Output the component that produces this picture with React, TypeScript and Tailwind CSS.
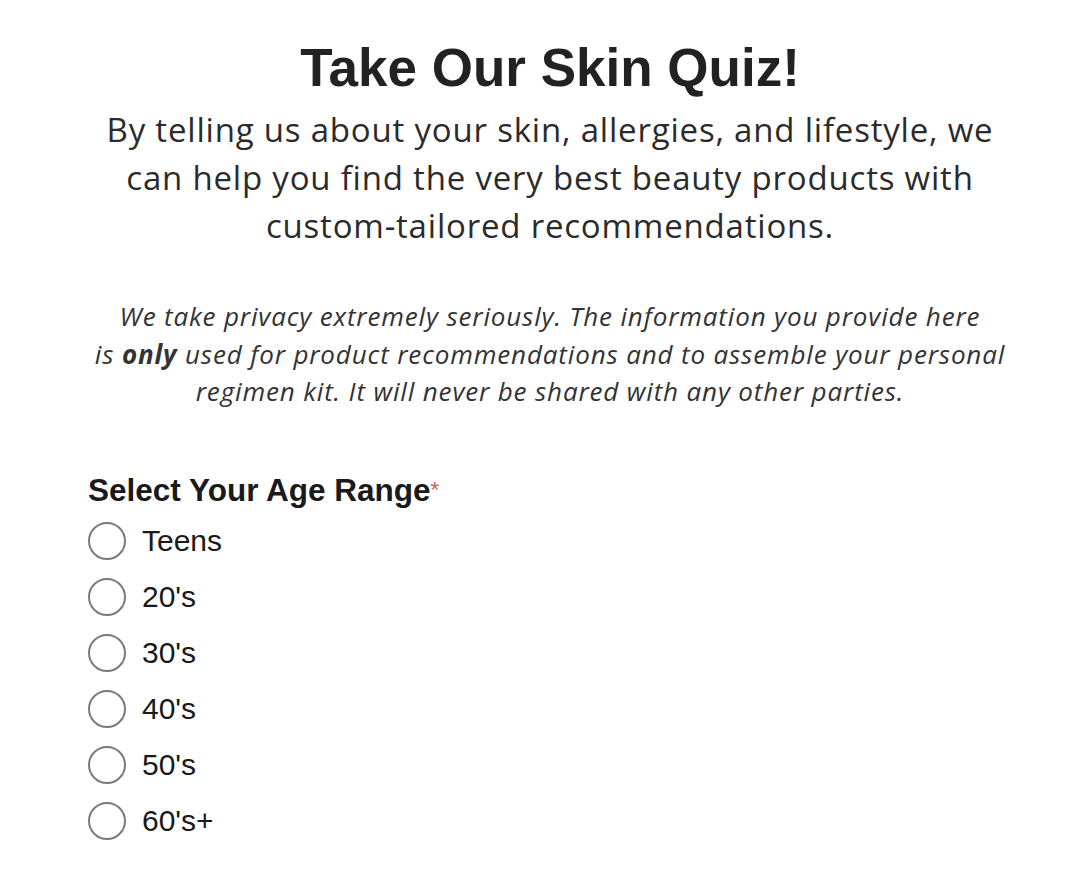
const ages = ["Teens", "20's", "30's", "40's", "50's", "60's+"];

const App = () => {
  return (
    <div className="min-h-[875px] w-full bg-white text-[#222]">
      <div className="ml-[88px] w-[924px] pt-[36px]">
        <h1 className="text-center font-['Liberation_Sans',Arial,sans-serif] text-[53px] font-bold leading-[64px]">
          Take Our Skin Quiz!
        </h1>
        <p className="mt-[6px] text-center font-['Open_Sans',sans-serif] text-[33px] leading-[48px] tracking-[0.8px] text-[#2b2b2b]">
          By telling us about your skin, allergies, and lifestyle, we
          <br />
          can help you find the very best beauty products with
          <br />
          custom-tailored recommendations.
        </p>
        <p className="mt-[48px] text-center font-['Open_Sans',sans-serif] text-[26px] italic leading-[37.5px] tracking-[0.85px] text-[#333]">
          We take privacy extremely seriously. The information you provide here
          <br />
          is <b className="font-bold">only</b> used for product recommendations and to assemble your personal
          <br />
          regimen kit. It will never be shared with any other parties.
        </p>

        <fieldset className="mt-[59px] font-['Liberation_Sans',Arial,sans-serif]">
          <legend className="text-[31.5px] font-bold leading-[40px] text-[#1a1a1a]">
            Select Your Age Range<span className="align-top text-[22px] font-normal text-[#d9534f]">*</span>
          </legend>
          <div className="mt-[3px] flex flex-col">
            {ages.map((age) => (
              <label key={age} className="flex h-[56px] items-center gap-[16px]">
                <span className="h-[38px] w-[38px] shrink-0 rounded-full border-2 border-[#7a7a7a] bg-white" />
                <span className="text-[30px] leading-none text-[#1a1a1a]">{age}</span>
              </label>
            ))}
          </div>
        </fieldset>
      </div>
    </div>
  );
};

export default App;
